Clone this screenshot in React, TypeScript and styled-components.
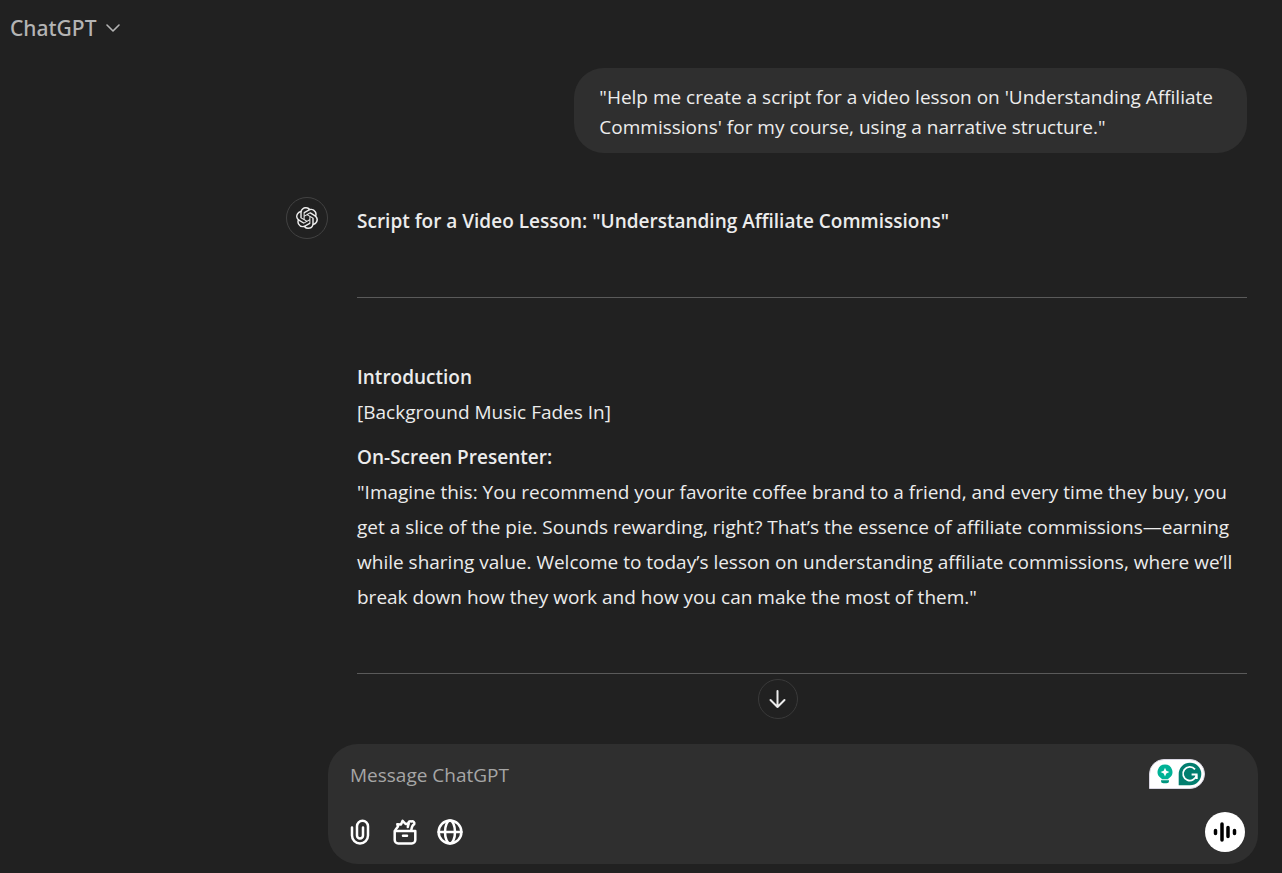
import React from "react";
import styled, { createGlobalStyle } from "styled-components";
import { SiOpenai } from "react-icons/si";

const GlobalStyle = createGlobalStyle`
  * { box-sizing: border-box; }
  body {
    margin: 0;
    background: #212121;
    color: #ececec;
    font-family: "Segoe UI", "Open Sans", "Noto Sans", sans-serif;
    font-size: 19px;
  }
  button { font: inherit; color: inherit; cursor: pointer; }
`;

const Page = styled.div`
  min-height: 100vh;
  display: flex;
  flex-direction: column;
`;

const Header = styled.header`
  height: 56px;
  padding: 0 10px;
  display: flex;
  align-items: center;
`;

const ModelButton = styled.button`
  display: flex;
  align-items: center;
  gap: 10px;
  padding: 0;
  border: 0;
  background: none;
  color: #b4b4b4;
  font-family: "Segoe UI", "Noto Sans", sans-serif;
  font-size: 21px;
  font-weight: 500;
`;

const Thread = styled.main`
  flex: 1;
  display: flex;
  flex-direction: column;
  padding: 12px 35px 0 286px;
`;

const UserMessage = styled.p`
  align-self: flex-end;
  max-width: 70%;
  margin: 0 0 44px;
  padding: 14px 25px 11px;
  border-radius: 30px;
  background: #2f2f2f;
  line-height: 30px;
`;

const Reply = styled.article`
  display: flex;
  gap: 29px;
`;

const Avatar = styled.div`
  flex: none;
  width: 42px;
  height: 42px;
  display: grid;
  place-items: center;
  border: 1px solid #424242;
  border-radius: 50%;
`;

const ReplyBody = styled.div`
  flex: 1;
  padding-top: 7px;
  line-height: 35px;
`;

const Paragraph = styled.p<{ $spaced?: boolean }>`
  margin: 0 0 ${(p) => (p.$spaced ? "10px" : "0")};
`;

const Strong = styled.strong`
  font-weight: 600;
`;

const Divider = styled.hr`
  height: 1px;
  margin: 58px 0 62px;
  border: 0;
  background: #5a5a5a;

  &:last-child { margin-bottom: 0; }
`;

const Footer = styled.footer`
  display: flex;
  flex-direction: column;
  align-items: center;
  padding: 0 24px 9px 328px;
`;

const ScrollButton = styled.button`
  width: 40px;
  height: 40px;
  margin: 0 30px 25px 0;
  padding: 0;
  display: grid;
  place-items: center;
  border: 1px solid #3a3a3a;
  border-radius: 50%;
  background: #212121;
`;

const Composer = styled.form`
  width: 100%;
  height: 120px;
  padding: 15px 13px 12px 22px;
  display: flex;
  flex-direction: column;
  justify-content: space-between;
  border-radius: 30px;
  background: #2f2f2f;
`;

const ComposerRow = styled.div<{ $inset?: boolean }>`
  display: flex;
  align-items: center;
  justify-content: space-between;
  padding-right: ${(p) => (p.$inset ? "40px" : "0")};
`;

const MessageInput = styled.input`
  flex: 1;
  min-width: 0;
  height: 30px;
  padding: 2px 0 0;
  border: 0;
  outline: 0;
  background: none;
  color: #ececec;
  font: inherit;

  &::placeholder { color: #a6a6a6; opacity: 1; }
`;

const Tools = styled.div`
  display: flex;
  gap: 15px;
  margin-left: -5px;
`;

const ToolButton = styled.button`
  width: 30px;
  height: 30px;
  padding: 0;
  display: grid;
  place-items: center;
  border: 0;
  background: none;
  color: #fff;
`;

const AssistBadge = styled.button`
  width: 56px;
  height: 30px;
  padding: 0 2px 0 7px;
  display: flex;
  align-items: center;
  justify-content: space-between;
  border: 1px solid #d9d6e2;
  border-radius: 15px 15px 15px 0;
  background: #fff;
`;

const VoiceButton = styled.button`
  width: 40px;
  height: 40px;
  padding: 0;
  display: grid;
  place-items: center;
  border: 0;
  border-radius: 50%;
  background: #fff;
  color: #000;
`;

const line = { fill: "none", stroke: "currentColor", strokeLinecap: "round", strokeLinejoin: "round" } as const;

const ChevronIcon = () => (
  <svg width="14" height="8" viewBox="0 0 14 8" {...line} strokeWidth="1.6"><path d="M1 1l6 6 6-6" /></svg>
);

const ArrowDownIcon = () => (
  <svg width="18" height="20" viewBox="0 0 18 20" {...line} strokeWidth="2"><path d="M8.500 2v16M1.500 11l7 7 7-7" /></svg>
);

const ClipIcon = () => (
  <svg width="30" height="30" viewBox="0 0 30 30" {...line} strokeWidth="2.5">
    <path d="M7 10.500v8a8 8 0 0 0 16 0V9.200a5.500 5.500 0 0 0-11 0v9.300a3 3 0 0 0 6 0V10.500" />
  </svg>
);

const ToolboxIcon = () => (
  <svg width="30" height="30" viewBox="0 0 30 30" {...line} strokeWidth="2.5">
    <path d="M4.700 14h20.600v9a3.500 3.500 0 0 1-3.500 3.500H8.200A3.500 3.500 0 0 1 4.700 23zM13 18.800h4" />
    <path d="M5.500 12.800L8 9.600 7.300 7.200l3.700.3 1.600-3.700 3 3.200 3-.4-.8 3.400" />
    <path d="M18.500 6.500c-.4-1.800 1.200-2.900 2.700-2 2-.7 3.800.9 3 2.800-1.900.6-2.400 2.900-2.900 5.700" />
  </svg>
);

const GlobeIcon = () => (
  <svg width="30" height="30" viewBox="0 0 30 30" {...line} strokeWidth="2.5">
    <circle cx="15" cy="15" r="11.400" />
    <ellipse cx="15" cy="15" rx="5" ry="11.400" />
    <path d="M3.600 15h22.800" />
  </svg>
);

const BulbIcon = () => (
  <svg width="16" height="20" viewBox="0 0 16 20">
    <path fill="#00b296" d="M8 .5A7.400 7.400 0 0 0 3.800 14c.6.400.9.8 1 1.300h6.400c.1-.5.4-.9 1-1.300A7.400 7.400 0 0 0 8 .5z" />
    <path fill="#fff" d="M8 3.700l1.300 3.100 3.100 1.300-3.100 1.300L8 12.500 6.700 9.400 3.600 8.100l3.100-1.300z" />
    <path fill="#00967f" d="M4 16.300h8v.5a2.500 2.500 0 0 1-2.500 2.500h-3A2.500 2.500 0 0 1 4 16.800z" />
  </svg>
);

const WriterIcon = () => (
  <svg width="24" height="24" viewBox="0 0 24 24">
    <path fill="#027e6f" d="M12 .7a11.300 11.300 0 1 1 0 22.600H.7V12A11.300 11.300 0 0 1 12 .7z" />
    <path d="M17 7.300A6.800 6.800 0 1 0 18.600 12.500h-5M18.800 12.500v4.500" fill="none" stroke="#fff" strokeWidth="1.800" />
  </svg>
);

const VoiceIcon = () => (
  <svg width="24" height="24" viewBox="0 0 24 24" {...line} strokeWidth="3.500">
    <path d="M2.500 10.500v3M9 4v16M15 7.500v9M21.500 10.500v3" />
  </svg>
);

export default function App() {
  return (
    <Page>
      <GlobalStyle />
      <Header>
        <ModelButton type="button">ChatGPT<ChevronIcon /></ModelButton>
      </Header>
      <Thread>
        <UserMessage>
          "Help me create a script for a video lesson on 'Understanding Affiliate Commissions' for my course, using a narrative structure."
        </UserMessage>
        <Reply>
          <Avatar><SiOpenai size={22} /></Avatar>
          <ReplyBody>
            <Paragraph><Strong>Script for a Video Lesson: "Understanding Affiliate Commissions"</Strong></Paragraph>
            <Divider />
            <Paragraph $spaced><Strong>Introduction</Strong><br />[Background Music Fades In]</Paragraph>
            <Paragraph>
              <Strong>On-Screen Presenter:</Strong><br />
              "Imagine this: You recommend your favorite coffee brand to a friend, and every time they buy, you get a slice of the pie. Sounds rewarding, right? That’s the essence of affiliate commissions—earning while sharing value. Welcome to today’s lesson on understanding affiliate commissions, where we’ll break down how they work and how you can make the most of them."
            </Paragraph>
            <Divider />
          </ReplyBody>
        </Reply>
      </Thread>
      <Footer>
        <ScrollButton type="button" aria-label="Scroll to bottom"><ArrowDownIcon /></ScrollButton>
        <Composer onSubmit={(e) => e.preventDefault()}>
          <ComposerRow $inset>
            <MessageInput aria-label="Message ChatGPT" placeholder="Message ChatGPT" />
            <AssistBadge type="button" aria-label="Writing suggestions"><BulbIcon /><WriterIcon /></AssistBadge>
          </ComposerRow>
          <ComposerRow>
            <Tools>
              <ToolButton type="button" aria-label="Attach files"><ClipIcon /></ToolButton>
              <ToolButton type="button" aria-label="View tools"><ToolboxIcon /></ToolButton>
              <ToolButton type="button" aria-label="Search the web"><GlobeIcon /></ToolButton>
            </Tools>
            <VoiceButton type="button" aria-label="Voice mode"><VoiceIcon /></VoiceButton>
          </ComposerRow>
        </Composer>
      </Footer>
    </Page>
  );
}
